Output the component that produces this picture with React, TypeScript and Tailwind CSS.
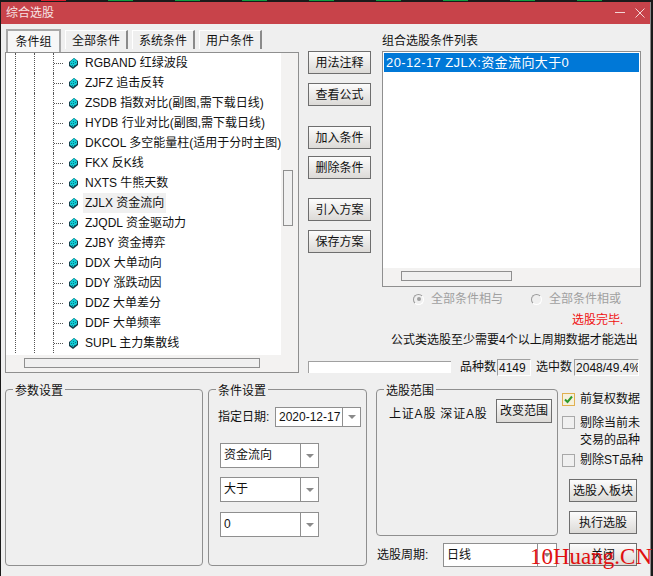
import type { ReactNode } from "react";

const treeItems = [
  "RGBAND 红绿波段",
  "ZJFZ 追击反转",
  "ZSDB 指数对比(副图,需下载日线)",
  "HYDB 行业对比(副图,需下载日线)",
  "DKCOL 多空能量柱(适用于分时主图)",
  "FKX 反K线",
  "NXTS 牛熊天数",
  "ZJLX 资金流向",
  "ZJQDL 资金驱动力",
  "ZJBY 资金搏弈",
  "DDX 大单动向",
  "DDY 涨跌动因",
  "DDZ 大单差分",
  "DDF 大单频率",
  "SUPL 主力集散线",
];

const CubeIcon = () => (
  <svg width="9" height="11" viewBox="0 0 9 11" className="shrink-0">
    <polygon points="5,0 9,3 9,7 4,11 0,8 0,4" fill="#123c48" />
    <polygon points="5,0 8,3 8,6 4,9 1,7 1,4" fill="#12ccd4" />
    <path d="M2 5h1v1H2zM4 3h1v1H4zM4 5h1v1H4zM6 4h1v1H6zM3 7h1v1H3zM5 7h1v1H5z" fill="#067a88" />
  </svg>
);

const TreeRow = ({ label, selected }: { label: string; selected?: boolean }) => (
  <div className="flex h-5 items-stretch pl-[8px]">
    <span className="w-[19px] shrink-0 border-l border-dotted border-[#555]" />
    <span className="w-[19px] shrink-0 border-l border-dotted border-[#555]" />
    <span className="flex w-[30px] shrink-0 items-center gap-[6px] border-l border-dotted border-[#555]">
      <span className="w-[9px] shrink-0 border-t border-dotted border-[#555]" />
      <CubeIcon />
    </span>
    <span
      className={`flex items-center whitespace-nowrap px-[2px] ${selected ? "bg-[#f0f0f0]" : ""}`}
    >
      {label}
    </span>
  </div>
);

const Btn = ({ children, className }: { children: ReactNode; className?: string }) => (
  <div
    className={`flex shrink-0 items-center justify-center border border-[#6e6e6e] bg-linear-to-b from-[#fcfcfc] to-[#dcdad7] text-[#111] ${className ?? ""}`}
  >
    {children}
  </div>
);

const Combo = ({ value, className, btn }: { value: string; className: string; btn: string }) => (
  <div className={`flex shrink-0 border border-[#8f8f8f] bg-white ${className}`}>
    <span className="flex-1 overflow-hidden whitespace-nowrap pl-[3px] pt-[1px] leading-[inherit]">{value}</span>
    <span className={`flex items-center justify-center border-l border-[#8f8f8f] ${btn}`}>
      <span className="h-0 w-0 border-x-[4px] border-t-[4px] border-x-transparent border-t-[#8a8a8a]" />
    </span>
  </div>
);

const Group = ({ title, className, children }: { title: string; className: string; children?: ReactNode }) => (
  <div className={`relative shrink-0 rounded-[4px] border border-[#8f8f8f] ${className}`}>
    <span className="absolute left-[7px] top-[-7px] bg-[#efefef] px-[2px] leading-[16px]">{title}</span>
    {children}
  </div>
);

const Check = ({ checked }: { checked?: boolean }) => (
  <span
    className={`flex h-[13px] w-[13px] shrink-0 items-center justify-center border ${checked ? "border-[#e0b050] bg-[#f6f0dc]" : "border-[#a8a8a8] bg-[#f0f0f0]"}`}
  >
    {checked && (
      <svg width="9" height="9" viewBox="0 0 9 9">
        <path d="M1 4.5 L3.5 7 L8 1.5" fill="none" stroke="#2e9a2e" strokeWidth="2" />
      </svg>
    )}
  </span>
);

const Field = ({ children, className }: { children: ReactNode; className: string }) => (
  <div
    className={`h-[17px] shrink-0 overflow-hidden whitespace-nowrap border border-b-white border-l-[#a0a0a0] border-r-white border-t-[#a0a0a0] bg-[#efefef] pl-[1px] leading-[16px] ${className}`}
  >
    {children}
  </div>
);

const Radio = ({ on }: { on?: boolean }) => (
  <span className="flex h-[11px] w-[11px] shrink-0 items-center justify-center rounded-full border border-[#9a9a9a] border-b-white border-r-white bg-[#efefef]">
    {on && <span className="h-[4px] w-[4px] rounded-full bg-[#a0a0a0]" />}
  </span>
);

export default function App() {
  return (
    <div className="relative h-[576px] w-[653px] overflow-hidden bg-[#1a1a1a] font-['Liberation_Sans','Noto_Sans_CJK_SC',sans-serif] text-[12px] leading-[14px] text-[#111]">
      <div className="flex h-[2px] pl-[41px]">
        {["#d81e2c", "#0fa040", "#0fa040", "#0fa040", "#0fa040", "#0fa040", "#0fa040", "#0fa040", "#0fa040"].map((c, i) => (
          <span key={i} className="w-[67px]">
            <span className="block h-[1px] w-[25px]" style={{ backgroundColor: c }} />
          </span>
        ))}
      </div>

      <div className="ml-[1px] h-[574px] w-[650px] border-r border-[#8a8a8a] bg-[#efefef]">
        <div className="flex h-[22px] items-center bg-[#c8434a] pl-[5px] pr-[5px] text-[#f7e4e4]">
          <span>综合选股</span>
          <svg width="30" height="10" viewBox="0 0 30 10" className="ml-auto">
            <path d="M0 4.5 H10" stroke="#f3d6d6" strokeWidth="1" />
            <path d="M20.5 0.5 L29.5 9.5 M29.5 0.5 L20.5 9.5" stroke="#f3d6d6" strokeWidth="1" />
          </svg>
        </div>

        <div className="flex h-[356px] pl-[4px]">
          {/* left: tabs and tree */}
          <div className="w-[294px] shrink-0 pt-[5px]">
            <div className="flex h-[23px] items-start pl-[1px]">
              <div className="flex h-[23px] w-[55px] items-center justify-center border-x-2 border-t-2 border-x-[#a8a8a8] border-t-[#a8a8a8] bg-[#f7f7f7] pt-[1px]">
                条件组
              </div>
              {["全部条件", "系统条件", "用户条件"].map((t) => (
                <div
                  key={t}
                  className="ml-[4px] mt-[1px] flex h-[19px] w-[63px] items-center justify-center border-l border-r-2 border-t border-l-white border-r-[#8a8a8a] border-t-white pt-[2px]"
                >
                  {t}
                </div>
              ))}
            </div>
            <div className="flex h-[321px] border border-[#8f8f8f] bg-[#f3f2f1]">
              <div className="w-[275px] shrink-0">
                <div className="h-[302px] w-[275px] overflow-hidden bg-white pl-[1px] pr-[1px]">
                  {treeItems.map((t) => (
                    <TreeRow key={t} label={t} selected={t.startsWith("ZJLX")} />
                  ))}
                </div>
                <div className="ml-[18px] mt-[3px] h-[10px] w-[236px] border border-[#8f8f8f] bg-[#f0f0f0]" />
              </div>
              <div className="ml-[2px] mt-[117px] h-[56px] w-[10px] border border-[#8f8f8f] bg-[#f0f0f0]" />
            </div>
          </div>

          {/* right: buttons, chosen list, status */}
          <div className="ml-[9px] w-[333px] shrink-0">
            <div className="flex h-[283px]">
              <div className="flex w-[63px] shrink-0 flex-col pt-[27px]">
                <Btn className="h-[23px] w-[63px]">用法注释</Btn>
                <Btn className="mt-[9px] h-[23px] w-[63px]">查看公式</Btn>
                <Btn className="mt-[20px] h-[23px] w-[63px]">加入条件</Btn>
                <Btn className="mt-[7px] h-[23px] w-[63px]">删除条件</Btn>
                <Btn className="mt-[19px] h-[23px] w-[63px]">引入方案</Btn>
                <Btn className="mt-[9px] h-[23px] w-[63px]">保存方案</Btn>
              </div>
              <div className="ml-[11px] w-[259px] shrink-0">
                <div className="h-[27px] pt-[10px]">组合选股条件列表</div>
                <div className="flex h-[236px] flex-col border border-[#8f8f8f] bg-white p-[1px] pb-0">
                  <div className="flex h-[19px] shrink-0 items-center bg-[#0078d7] pl-[2px] text-[13px] tracking-[0.4px] text-white">
                    20-12-17 ZJLX:资金流向大于0
                  </div>
                  <div className="flex-1" />
                  <div className="-mx-[1px] h-[18px] shrink-0 bg-[#f3f2f1] pl-[18px] pt-[3px]">
                    <div className="h-[10px] w-[111px] border border-[#8f8f8f] bg-[#f0f0f0]" />
                  </div>
                </div>
                <div className="mt-[4px] flex h-[16px] items-center pl-[31px] text-[#a0a0a0]">
                  <Radio on />
                  <span className="ml-[7px]">全部条件相与</span>
                  <span className="ml-[28px]">
                    <Radio />
                  </span>
                  <span className="ml-[7px]">全部条件相或</span>
                </div>
              </div>
            </div>
            <div className="mt-[6px] h-[14px] pl-[264px] whitespace-nowrap text-[#f01010]">选股完毕.</div>
            <div className="mt-[6px] h-[14px] pl-[83px] whitespace-nowrap">公式类选股至少需要4个以上周期数据才能选出</div>
            <div className="mt-[12px] flex h-[17px] items-start">
              <div className="mt-[2px] h-[12px] w-[143px] shrink-0 border-l border-t border-[#a0a0a0] bg-white" />
              <span className="ml-[9px] shrink-0 leading-[17px]">品种数</span>
              <Field className="ml-[1px] w-[34px]">4149</Field>
              <span className="ml-[5px] shrink-0 leading-[17px]">选中数</span>
              <Field className="ml-[2px] w-[65px]">2048/49.4%</Field>
            </div>
          </div>
        </div>

        {/* bottom groups */}
        <div className="mt-[9px] flex pl-[4px]">
          <Group title="参数设置" className="h-[177px] w-[198px]" />
          <Group title="条件设置" className="ml-[5px] h-[177px] w-[159px] pl-[9px] pt-[17px]">
            <div className="flex items-center">
              <span className="w-[57px] shrink-0 whitespace-nowrap">指定日期:</span>
              <Combo value="2020-12-17" className="h-[20px] w-[86px] leading-[16px]" btn="w-[18px]" />
            </div>
            <div className="ml-[2px] mt-[16px] flex flex-col">
              <Combo value="资金流向" className="h-[25px] w-[99px] leading-[21px]" btn="w-[18px]" />
              <Combo value="大于" className="mt-[9px] h-[25px] w-[99px] leading-[21px]" btn="w-[18px]" />
              <Combo value="0" className="mt-[10px] h-[25px] w-[99px] leading-[21px]" btn="w-[18px]" />
            </div>
          </Group>

          <div className="ml-[9px] w-[182px] shrink-0">
            <Group title="选股范围" className="flex h-[147px] items-start pl-[12px] pt-[9px]">
              <span className="mt-[8px] w-[100px] shrink-0 whitespace-nowrap tracking-[0.8px]">上证A股 深证A股</span>
              <Btn className="ml-[7px] h-[24px] w-[56px]">改变范围</Btn>
            </Group>
            <div className="mt-[7px] flex items-center pl-[1px]">
              <span className="w-[66px] shrink-0 whitespace-nowrap">选股周期:</span>
              <Combo value="日线" className="h-[24px] w-[114px] leading-[20px]" btn="w-[19px]" />
            </div>
          </div>

          <div className="ml-[4px] flex w-[84px] shrink-0 flex-col">
            <div className="mt-[3px] flex items-center gap-[5px] whitespace-nowrap">
              <Check checked />
              <span>前复权数据</span>
            </div>
            <div className="mt-[10px] flex gap-[5px] whitespace-nowrap">
              <Check />
              <span className="-mt-[1px] leading-[17px]">
                剔除当前未
                <br />
                交易的品种
              </span>
            </div>
            <div className="mt-[4px] flex items-center gap-[5px] whitespace-nowrap">
              <Check />
              <span>剔除ST品种</span>
            </div>
            <Btn className="ml-[7px] mt-[12px] h-[23px] w-[68px]">选股入板块</Btn>
            <Btn className="ml-[7px] mt-[9px] h-[23px] w-[68px]">执行选股</Btn>
            <Btn className="ml-[7px] mt-[9px] h-[23px] w-[68px]">关闭</Btn>
          </div>
        </div>
      </div>

      <span className="absolute left-[530px] top-[544px] font-['Liberation_Serif',serif] text-[23px] leading-[26px] text-[#e01010]">
        10Huang.CN
      </span>
    </div>
  );
}
